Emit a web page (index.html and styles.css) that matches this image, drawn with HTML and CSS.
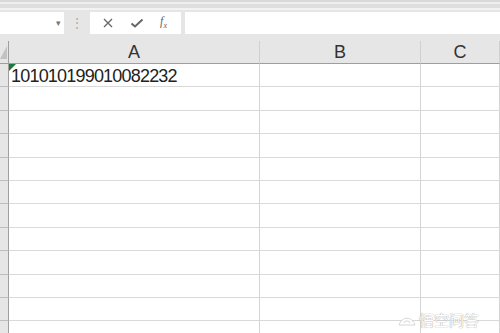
FILE: index.html
```html
<!DOCTYPE html>
<html lang="zh-CN">
<head>
  <meta charset="UTF-8" />
  <title>Sheet</title>
  <link rel="stylesheet" href="styles.css">
</head>
<body>
  <div class="top-strip"></div>

  <div class="formula-bar">
    <div class="name-box"><span class="drop">&#9662;</span></div>
    <div class="grip">&#8942;</div>
    <div class="fx-buttons">
      <svg width="12" height="12" viewBox="0 0 12 12"><path d="M2 2 L10 10 M10 2 L2 10" stroke="#666" stroke-width="1.3" fill="none"/></svg>
      <svg width="14" height="12" viewBox="0 0 14 12"><path d="M1.5 6.5 L5 9.5 L12.5 2.5" stroke="#666" stroke-width="2" fill="none"/></svg>
      <span class="fx">f<sub>x</sub></span>
    </div>
    <div class="formula-input"></div>
  </div>

  <div class="sheet">
    <div class="corner"><span class="corner-tri"></span></div>
    <div class="col-head">A</div>
    <div class="col-head">B</div>
    <div class="col-head">C</div>

    <div class="row-head"></div>
    <div class="cell first"><span class="note"></span>101010199010082232</div>
    <div class="cell"></div>
    <div class="cell"></div>
  </div>

  <div class="watermark">
    <svg width="18" height="12" viewBox="0 0 18 12"><path d="M1 11 C4 2 14 2 17 11 Z M6 9 a3 2 0 0 1 6 0" fill="#fff" stroke="#ccc" stroke-width="0.8"/></svg>
    <span>悟空问答</span>
  </div>

  <script>
    // fill the remaining empty rows
    const sheet = document.querySelector(".sheet");
    for (let i = 0; i < 11; i++) {
      sheet.insertAdjacentHTML("beforeend",
        '<div class="row-head"></div><div class="cell"></div><div class="cell"></div><div class="cell"></div>');
    }
  </script>
</body>
</html>
```

FILE: styles.css
```css
* {
  margin: 0;
  padding: 0;
  box-sizing: border-box;
}

body {
  width: 500px;
  height: 333px;
  overflow: hidden;
  background: #e6e6e6;
  font-family: "Liberation Sans", Arial, sans-serif;
  position: relative;
}

.top-strip {
  height: 10px;
  background: linear-gradient(#d9d9d9 0, #d9d9d9 2px, #efefef 2px, #efefef 4px, #dedede 4px, #dedede 8px, #f2f2f2 8px);
}

.formula-bar {
  height: 24px;
  display: flex;
  align-items: center;
  background: #e6e6e6;
  padding-top: 1px;
}

.name-box {
  width: 64px;
  height: 22px;
  background: #fff;
  display: flex;
  align-items: center;
  justify-content: flex-end;
  padding-right: 3px;
}

.drop {
  font-size: 9px;
  color: #777;
}

.grip {
  width: 26px;
  text-align: center;
  color: #aaa;
  font-size: 12px;
}

.fx-buttons {
  width: 91px;
  height: 22px;
  background: #fff;
  display: flex;
  align-items: center;
  justify-content: space-around;
  padding: 0 6px 0 4px;
}

.fx {
  font-family: "Liberation Serif", serif;
  font-style: italic;
  font-size: 12px;
  color: #666;
}

.fx sub {
  font-size: 8px;
}

.formula-input {
  flex: 1;
  height: 22px;
  margin-left: 4px;
  background: #fff;
}

.sheet {
  margin-top: 7px;
  display: grid;
  grid-template-columns: 9px 251px 161px 1fr;
  grid-auto-rows: 23.4px;
  grid-template-rows: 23px;
  background: #fff;
}

.corner {
  background: #e6e6e6;
  border-right: 1px solid #9e9e9e;
  border-bottom: 1px solid #9e9e9e;
  position: relative;
}

.corner-tri {
  position: absolute;
  left: 0;
  top: 5px;
  border-right: 7px solid #c2c2c2;
  border-top: 13px solid transparent;
}

.col-head {
  background: #e6e6e6;
  border-right: 1px solid #d0d0d0;
  border-bottom: 1px solid #9e9e9e;
  text-align: center;
  font-size: 18px;
  line-height: 22px;
  color: #333;
}

.row-head {
  background: #e6e6e6;
  border-right: 1px solid #9e9e9e;
  border-bottom: 1px solid #bdbdbd;
}

.cell {
  border-right: 1px solid #d4d4d4;
  border-bottom: 1px solid #d9d9d9;
}

.cell.first {
  position: relative;
  font-size: 18px;
  letter-spacing: -0.8px;
  line-height: 25px;
  padding-left: 2px;
  color: #222;
}

.note {
  position: absolute;
  left: 0;
  top: 0;
  border-top: 7px solid #1e7a3a;
  border-right: 7px solid transparent;
}

.watermark {
  position: absolute;
  left: 398px;
  top: 309px;
  display: flex;
  align-items: center;
  gap: 3px;
  color: #fff;
  font-family: "Noto Sans CJK SC", sans-serif;
  font-size: 15px;
  text-shadow: 0 0 1px #999, 0 0 1px #bbb;
}
```
